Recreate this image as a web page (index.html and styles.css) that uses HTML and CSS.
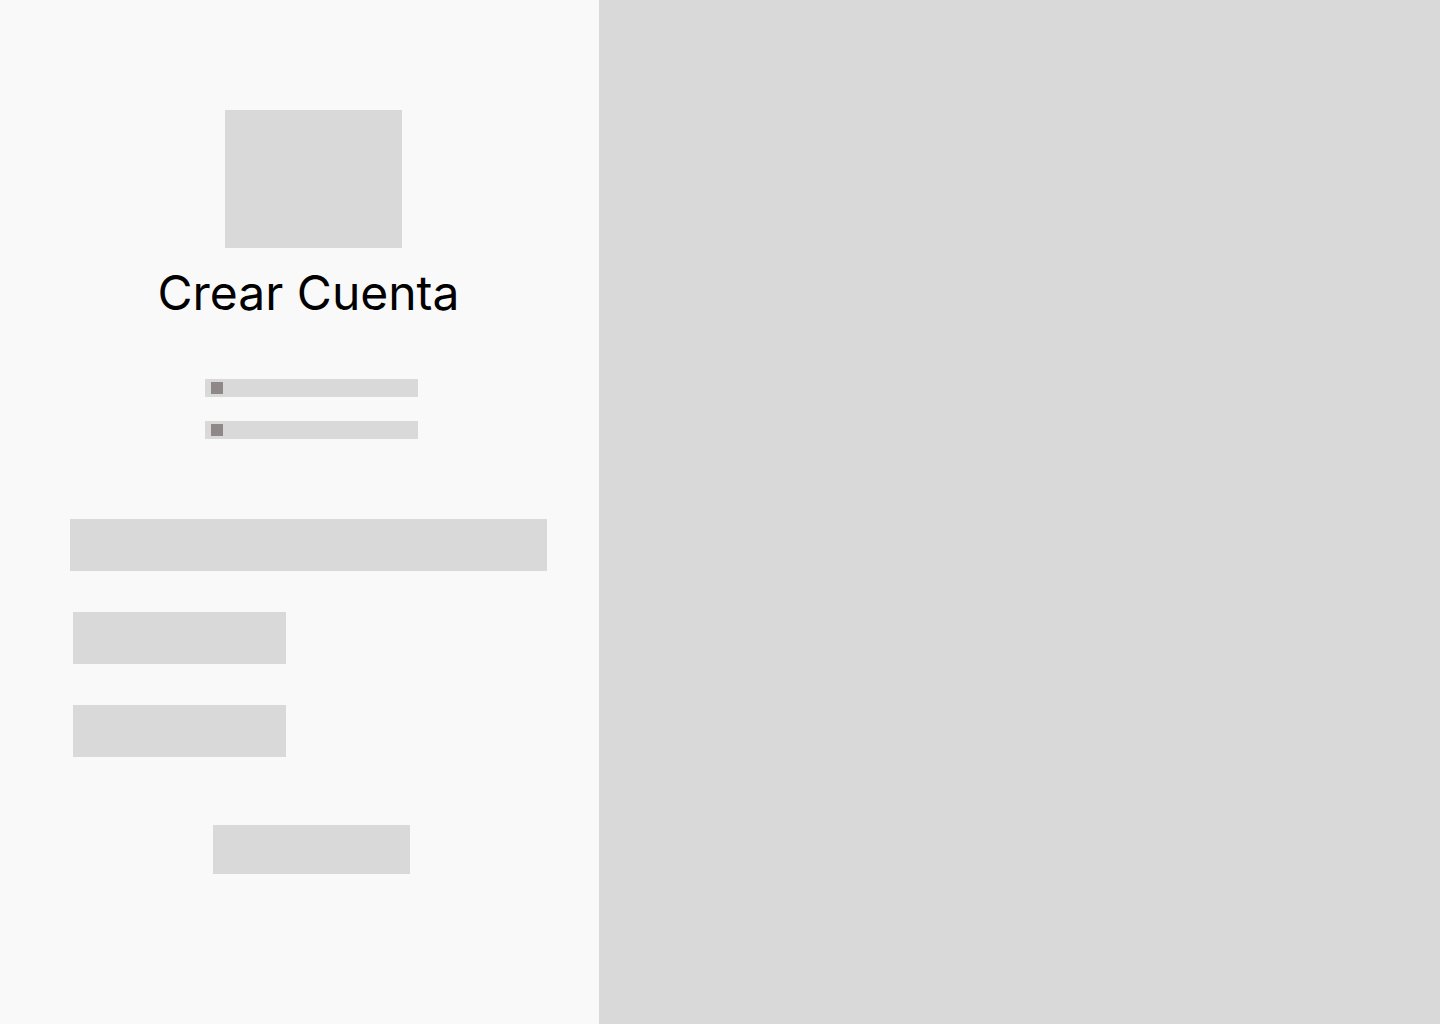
FILE: index.html
```html
<!DOCTYPE html>
<html lang="es">
<head>
<meta charset="utf-8">
<title>Crear Cuenta</title>
<link rel="stylesheet" href="styles.css">
</head>
<body>
<div class="page">
  <main class="panel">
    <div class="form">
      <div class="logo"></div>
      <h1 class="title">Crear Cuenta</h1>
      <div class="option first"><span class="check"></span></div>
      <div class="option second"><span class="check"></span></div>
      <div class="field wide"></div>
      <div class="field short gap1"></div>
      <div class="field short gap2"></div>
      <div class="button"></div>
    </div>
  </main>
  <aside class="side"></aside>
</div>
</body>
</html>
```

FILE: styles.css
```css
html, body {
  margin: 0;
  padding: 0;
  height: 100%;
}
body {
  font-family: Inter, "Noto Sans", sans-serif;
}
.page {
  display: flex;
  width: 1440px;
  height: 1024px;
}
.panel {
  width: 599px;
  flex: 0 0 599px;
  background: #f9f9f9;
}
.form {
  display: flex;
  flex-direction: column;
  align-items: flex-start;
  width: 477px;
  padding: 110px 0 0 70px;
}
.logo {
  width: 177px;
  height: 138px;
  margin-left: 155px;
  background: #d9d9d9;
}
.title {
  align-self: stretch;
  margin: 16px 0 0 0;
  font-size: 48px;
  line-height: 58px;
  font-weight: 400;
  color: #000;
  text-align: center;
}
.option {
  width: 213px;
  height: 18px;
  margin-left: 135px;
  background: #d9d9d9;
  display: flex;
  align-items: center;
  padding-left: 6px;
  box-sizing: border-box;
}
.option.first { margin-top: 57px; }
.option.second { margin-top: 24px; }
.check {
  width: 12px;
  height: 12px;
  background: #8f8888;
}
.field {
  background: #d9d9d9;
  height: 52px;
}
.field.wide {
  width: 477px;
  margin-top: 80px;
}
.field.short {
  width: 213px;
  margin-left: 3px;
  margin-top: 41px;
}
.button {
  width: 197px;
  height: 49px;
  margin-top: 68px;
  margin-left: 143px;
  background: #d9d9d9;
}
.side {
  flex: 1;
  background: #d9d9d9;
}
```
